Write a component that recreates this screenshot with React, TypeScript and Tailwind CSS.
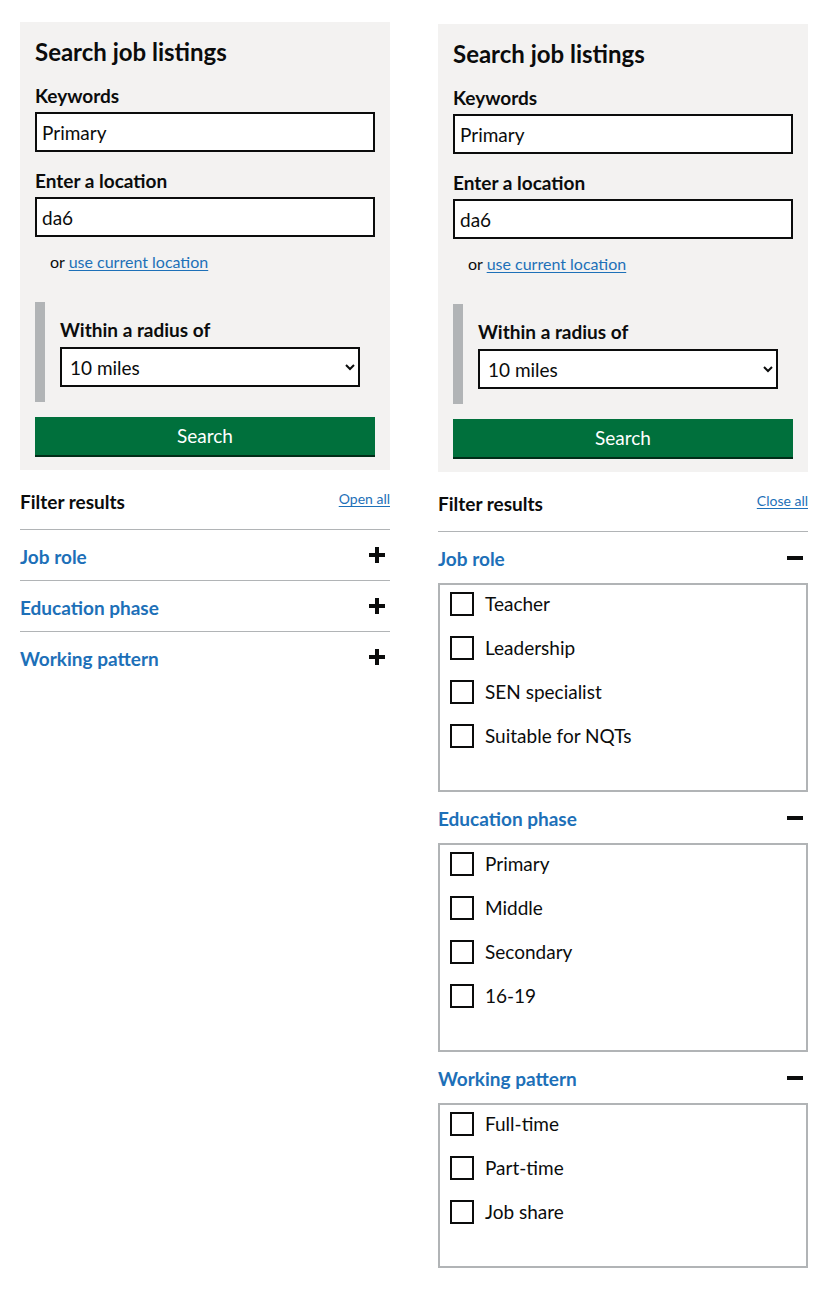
import { useState } from "react";

const FILTERS = [
  { title: "Job role", options: ["Teacher", "Leadership", "SEN specialist", "Suitable for NQTs"] },
  { title: "Education phase", options: ["Primary", "Middle", "Secondary", "16-19"] },
  { title: "Working pattern", options: ["Full-time", "Part-time", "Job share"] },
];

function SearchPanel() {
  const [keywords, setKeywords] = useState("Primary");
  const [location, setLocation] = useState("da6");
  const [radius, setRadius] = useState("10");

  return (
    <div className="bg-[#f3f2f1] px-[15px] pt-[15px] pb-[15px]">
      <h2 className="text-[24px] leading-[30px] font-bold mb-[16px]">Search job listings</h2>

      <label className="block text-[19px] leading-[25px] font-bold mb-[4px]">Keywords</label>
      <input
        value={keywords}
        onChange={(e) => setKeywords(e.target.value)}
        className="block w-full h-[40px] border-2 border-[#0b0c0c] bg-white px-[5px] text-[19px] outline-none"
      />

      <label className="block text-[19px] leading-[25px] font-bold mt-[16px] mb-[4px]">Enter a location</label>
      <input
        value={location}
        onChange={(e) => setLocation(e.target.value)}
        className="block w-full h-[40px] border-2 border-[#0b0c0c] bg-white px-[5px] text-[19px] outline-none"
      />

      <p className="mt-[15px] pl-[15px] text-[16px] leading-[20px]">
        or{" "}
        <a href="#" className="text-[#1d70b8] underline underline-offset-2">
          use current location
        </a>
      </p>

      {/* radius is revealed under the location field */}
      <div className="mt-[30px] border-l-[10px] border-[#b1b4b6] pl-[15px] py-[15px]">
        <label className="block text-[19px] leading-[25px] font-bold mb-[5px]">Within a radius of</label>
        <select
          value={radius}
          onChange={(e) => setRadius(e.target.value)}
          className="block w-[300px] h-[40px] border-2 border-[#0b0c0c] bg-white pl-[4px] text-[19px] outline-none"
        >
          <option value="1">1 mile</option>
          <option value="5">5 miles</option>
          <option value="10">10 miles</option>
          <option value="25">25 miles</option>
        </select>
      </div>

      <button className="mt-[15px] w-full h-[38px] bg-[#00703c] text-white text-[19px] shadow-[0_2px_0_#002d18]">
        Search
      </button>
    </div>
  );
}

function Icon({ open }: { open: boolean }) {
  return (
    <svg width="16" height="16" viewBox="0 0 16 16" className="shrink-0">
      <rect x="0" y="6" width="16" height="4" fill="#0b0c0c" />
      {!open && <rect x="6" y="0" width="4" height="16" fill="#0b0c0c" />}
    </svg>
  );
}

function FilterPanel({ open }: { open: boolean }) {
  return (
    <div className="mt-[19px]">
      <div className="flex justify-between items-start mb-[15px]">
        <h3 className="text-[19px] leading-[25px] font-bold">Filter results</h3>
        <a href="#" className="text-[14px] leading-[18px] text-[#1d70b8] underline underline-offset-2 mt-[1px]">
          {open ? "Close all" : "Open all"}
        </a>
      </div>

      {FILTERS.map((f, i) => (
        <div key={f.title} className={!open || i === 0 ? "border-t border-[#b1b4b6]" : ""}>
          <div className={`flex items-center justify-between pr-[5px] ${open ? "h-[51px]" : "h-[50px]"}`}>
            <span className="text-[19px] leading-[25px] font-bold text-[#1d70b8] pt-[2px]">{f.title}</span>
            <Icon open={open} />
          </div>
          {open && (
            <div className="border-2 border-[#b1b4b6] px-[10px] pt-[7px] pb-[42px] flex flex-col gap-[20px]">
              {f.options.map((o) => (
                <label key={o} className="flex items-center gap-[11px] h-[24px]">
                  <span className="w-[24px] h-[24px] border-2 border-[#0b0c0c] bg-white shrink-0" />
                  <span className="text-[19px] leading-[24px]">{o}</span>
                </label>
              ))}
            </div>
          )}
        </div>
      ))}
    </div>
  );
}

export default function App() {
  return (
    <div
      className="min-h-[1302px] bg-white text-[#0b0c0c] flex gap-[48px] pl-[20px]"
      style={{ fontFamily: "Lato, 'Liberation Sans', Arial, sans-serif" }}
    >
      <div className="w-[370px] mt-[22px]">
        <SearchPanel />
        <FilterPanel open={false} />
      </div>
      <div className="w-[370px] mt-[24px]">
        <SearchPanel />
        <FilterPanel open={true} />
      </div>
    </div>
  );
}
